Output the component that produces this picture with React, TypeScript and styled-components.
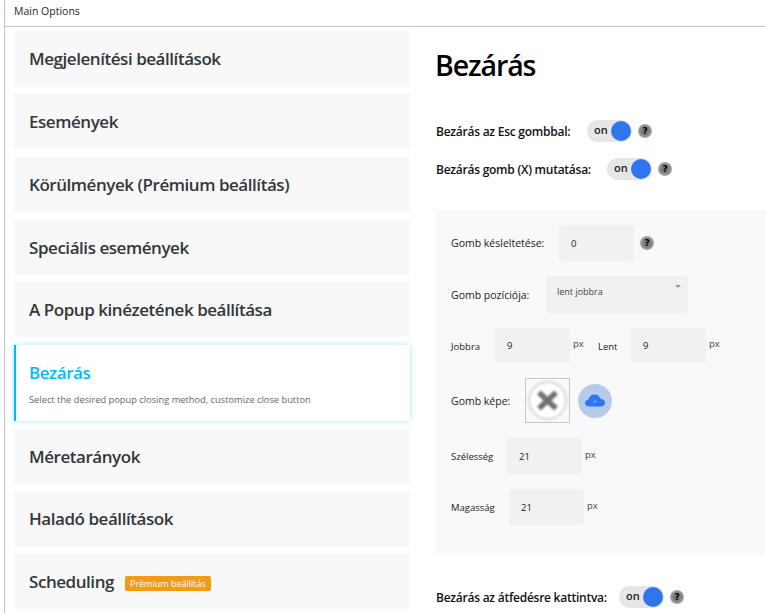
import React from 'react';
import styled, { createGlobalStyle } from 'styled-components';

const GlobalStyle = createGlobalStyle`
  html, body {
    margin: 0;
    background: #fff;
    overflow: hidden;
  }
  body {
    font-family: 'Open Sans', 'Noto Sans', sans-serif;
    color: #1d2327;
  }
`;

const Page = styled.div`
  width: 765px;
  height: 613px;
  overflow: hidden;
  box-sizing: border-box;
  margin-left: 4px;
  border-left: 1px solid #c3c4c7;
`;

const TopBar = styled.div`
  height: 27px;
  box-sizing: border-box;
  border-bottom: 1px solid #c3c4c7;
  padding: 4px 0 0 9px;
  font-size: 10.5px;
  line-height: 15px;
  font-weight: 500;
  color: #23282d;
`;

const Columns = styled.div`
  display: flex;
  padding: 4px 0 0 9px;
`;

const Menu = styled.div`
  width: 396px;
  flex: none;
  display: flex;
  flex-direction: column;
`;

const MenuItem = styled.div<{ $active?: boolean; $height?: number; $gap?: number }>`
  height: ${(p) => p.$height ?? 55}px;
  margin-bottom: ${(p) => p.$gap ?? 8}px;
  box-sizing: border-box;
  padding-left: ${(p) => (p.$active ? 13 : 15)}px;
  padding-top: ${(p) => (p.$active ? 2 : 0)}px;
  background: ${(p) => (p.$active ? '#fff' : '#f8f8f8')};
  border-left: ${(p) => (p.$active ? '2px solid #00b9ff' : 'none')};
  box-shadow: ${(p) => (p.$active ? '0 0 6px rgba(0, 185, 255, 0.35)' : 'none')};
  display: flex;
  flex-direction: column;
  justify-content: center;
`;

const MenuTitle = styled.div<{ $active?: boolean }>`
  display: flex;
  align-items: center;
  font-size: 17px;
  line-height: 24px;
  font-weight: 600;
  letter-spacing: -0.45px;
  color: ${(p) => (p.$active ? '#00b9ff' : '#32373c')};
`;

const MenuHint = styled.div`
  margin-top: 8px;
  font-size: 9.3px;
  line-height: 14px;
  color: #666;
`;

const PremiumBadge = styled.span`
  margin: 4px 0 0 11px;
  height: 15px;
  padding: 0 5px;
  background: #f39c12;
  border-radius: 2px;
  color: #fff;
  font-size: 9px;
  line-height: 15px;
  font-weight: 500;
  letter-spacing: 0;
`;

const Content = styled.div`
  margin-left: 26px;
  flex: 1;
  min-width: 0;
`;

const Heading = styled.h1`
  margin: 14px 0 0 -1px;
  font-size: 28.5px;
  line-height: 40px;
  font-weight: 600;
  letter-spacing: -1.1px;
  color: #000;
`;

const OptionRow = styled.div<{ $top: number }>`
  margin-top: ${(p) => p.$top}px;
  display: flex;
  align-items: center;
  height: 23px;
`;

const OptionLabel = styled.span<{ $width: number }>`
  width: ${(p) => p.$width}px;
  flex: none;
  margin-top: 1px;
  font-size: 12px;
  font-weight: 600;
  letter-spacing: -0.25px;
  color: #111;
  white-space: nowrap;
`;

const Toggle = styled.div`
  width: 45px;
  height: 22px;
  box-sizing: border-box;
  border-radius: 11px;
  background: #e6e6e6;
  padding: 1px;
  display: flex;
  align-items: center;
  justify-content: space-between;
  font-size: 11px;
  font-weight: 600;
  color: #222;
`;

const ToggleText = styled.span`
  margin: -2px 0 0 6px;
`;

const Knob = styled.span`
  width: 20px;
  height: 20px;
  border-radius: 50%;
  background: #2e75ee;
`;

const Help = styled.span`
  width: 14px;
  height: 14px;
  margin-left: 6px;
  flex: none;
  border-radius: 50%;
  background: radial-gradient(circle, #777 30%, #999 60%, #e4e4e4 100%);
  color: #000;
  font-size: 9px;
  line-height: 14px;
  font-weight: 800;
  text-align: center;
  font-family: 'DejaVu Sans', sans-serif;
`;

const Panel = styled.div`
  margin-top: 30px;
  height: 345px;
  box-sizing: border-box;
  padding: 15px 0 0 15px;
  background: #f9f9f9;
  border-radius: 3px;
`;

const FieldRow = styled.div<{ $top?: number; $height: number }>`
  margin-top: ${(p) => p.$top ?? 0}px;
  height: ${(p) => p.$height}px;
  display: flex;
  align-items: center;
`;

const FieldLabel = styled.span<{ $width: number; $small?: boolean; $shift?: number }>`
  width: ${(p) => p.$width}px;
  flex: none;
  margin-top: ${(p) => p.$shift ?? 0}px;
  font-size: ${(p) => (p.$small ? 9.5 : 10.5)}px;
  font-weight: 500;
  color: #222;
`;

const TextBox = styled.div<{ $height?: number }>`
  width: 75px;
  height: ${(p) => p.$height ?? 36}px;
  flex: none;
  box-sizing: border-box;
  padding-left: 12px;
  background: #f1f1f1;
  border-radius: 3px;
  display: flex;
  align-items: center;
  font-size: 9.5px;
  font-weight: 500;
  color: #222;
`;

const Unit = styled.span`
  margin: -4px 0 0 3px;
  width: 25px;
  flex: none;
  font-size: 9.5px;
  color: #444;
`;

const SelectBox = styled.div`
  position: relative;
  width: 142px;
  height: 37px;
  flex: none;
  box-sizing: border-box;
  padding: 9px 0 0 11px;
  background: #f1f1f1;
  border-radius: 3px;
  font-size: 9px;
  line-height: 14px;
  color: #444;
`;

const Caret = styled.span`
  position: absolute;
  top: 9px;
  right: 7px;
  border-left: 3px solid transparent;
  border-right: 3px solid transparent;
  border-top: 3px solid #999;
`;

const Thumb = styled.div`
  width: 45px;
  height: 45px;
  flex: none;
  box-sizing: border-box;
  border: 1px solid #c8c8c8;
  display: flex;
  align-items: center;
  justify-content: center;
`;

const UploadButton = styled.div`
  width: 34px;
  height: 34px;
  margin-left: 8px;
  flex: none;
  border-radius: 50%;
  background: #b6cbec;
  display: flex;
  align-items: center;
  justify-content: center;
`;

const BlurredImage = styled.svg`
  filter: blur(0.9px);
`;

const CloseImage = () => (
  <BlurredImage width="43" height="43" viewBox="0 0 43 43" fill="none">
    <circle cx="21.5" cy="21.5" r="18.5" stroke="#dedede" strokeWidth="2.5" fill="#fff" />
    <path d="M13 13.5 L30 29.5 M30 13.5 L13 29.5" stroke="#707070" strokeWidth="5.5" />
  </BlurredImage>
);

const CloudIcon = () => (
  <svg width="20" height="13" viewBox="0 0 20 13">
    <path
      d="M4.5 12.5 C1.8 12.5 0 11 0 9 C0 7.2 1.3 6 3.2 5.7 C3.9 2.4 6.6 0.4 9.6 0.4 C12.5 0.4 14.7 2.2 15.5 4.8 C18 5 20 6.6 20 8.9 C20 11 18.2 12.5 15.8 12.5 Z"
      fill="#2e75ee"
    />
    <path d="M8 8.5 L10 6.8 L12 8.5" stroke="#b6cbec" strokeWidth="0.8" fill="none" />
  </svg>
);

const Option: React.FC<{ label: string; width: number; top: number }> = ({ label, width, top }) => (
  <OptionRow $top={top}>
    <OptionLabel $width={width}>{label}</OptionLabel>
    <Toggle>
      <ToggleText>on</ToggleText>
      <Knob />
    </Toggle>
    <Help>?</Help>
  </OptionRow>
);

export default function App() {
  return (
    <Page>
      <GlobalStyle />
      <TopBar>Main Options</TopBar>
      <Columns>
        <Menu>
          <MenuItem $height={56} $gap={7}>
            <MenuTitle>Megjelenítési beállítások</MenuTitle>
          </MenuItem>
          <MenuItem>
            <MenuTitle>Események</MenuTitle>
          </MenuItem>
          <MenuItem>
            <MenuTitle>Körülmények (Prémium beállítás)</MenuTitle>
          </MenuItem>
          <MenuItem $gap={7}>
            <MenuTitle>Speciális események</MenuTitle>
          </MenuItem>
          <MenuItem>
            <MenuTitle>A Popup kinézetének beállítása</MenuTitle>
          </MenuItem>
          <MenuItem $active $height={76}>
            <MenuTitle $active>Bezárás</MenuTitle>
            <MenuHint>Select the desired popup closing method, customize close button</MenuHint>
          </MenuItem>
          <MenuItem $gap={7}>
            <MenuTitle>Méretarányok</MenuTitle>
          </MenuItem>
          <MenuItem $height={56} $gap={7}>
            <MenuTitle>Haladó beállítások</MenuTitle>
          </MenuItem>
          <MenuItem>
            <MenuTitle>
              Scheduling
              <PremiumBadge>Prémium beállítás</PremiumBadge>
            </MenuTitle>
          </MenuItem>
        </Menu>
        <Content>
          <Heading>Bezárás</Heading>
          <Option label="Bezárás az Esc gombbal:" width={151} top={34} />
          <Option label="Bezárás gomb (X) mutatása:" width={171} top={15} />
          <Panel>
            <FieldRow $height={36}>
              <FieldLabel $width={108}>Gomb késleltetése:</FieldLabel>
              <TextBox>0</TextBox>
              <Help>?</Help>
            </FieldRow>
            <FieldRow $top={15} $height={37}>
              <FieldLabel $width={95} $shift={1}>Gomb pozíciója:</FieldLabel>
              <SelectBox>
                lent jobbra
                <Caret />
              </SelectBox>
            </FieldRow>
            <FieldRow $top={15} $height={35}>
              <FieldLabel $width={44} $small $shift={2}>Jobbra</FieldLabel>
              <TextBox $height={35}>9</TextBox>
              <Unit>px</Unit>
              <FieldLabel $width={33} $small $shift={2}>Lent</FieldLabel>
              <TextBox $height={35}>9</TextBox>
              <Unit>px</Unit>
            </FieldRow>
            <FieldRow $top={15} $height={45}>
              <FieldLabel $width={74} $shift={1}>Gomb képe:</FieldLabel>
              <Thumb>
                <CloseImage />
              </Thumb>
              <UploadButton>
                <CloudIcon />
              </UploadButton>
            </FieldRow>
            <FieldRow $top={15} $height={36}>
              <FieldLabel $width={56} $small>Szélesség</FieldLabel>
              <TextBox>21</TextBox>
              <Unit>px</Unit>
            </FieldRow>
            <FieldRow $top={15} $height={36}>
              <FieldLabel $width={58} $small>Magasság</FieldLabel>
              <TextBox>21</TextBox>
              <Unit>px</Unit>
            </FieldRow>
          </Panel>
          <Option label="Bezárás az átfedésre kattintva:" width={183} top={30} />
        </Content>
      </Columns>
    </Page>
  );
}
